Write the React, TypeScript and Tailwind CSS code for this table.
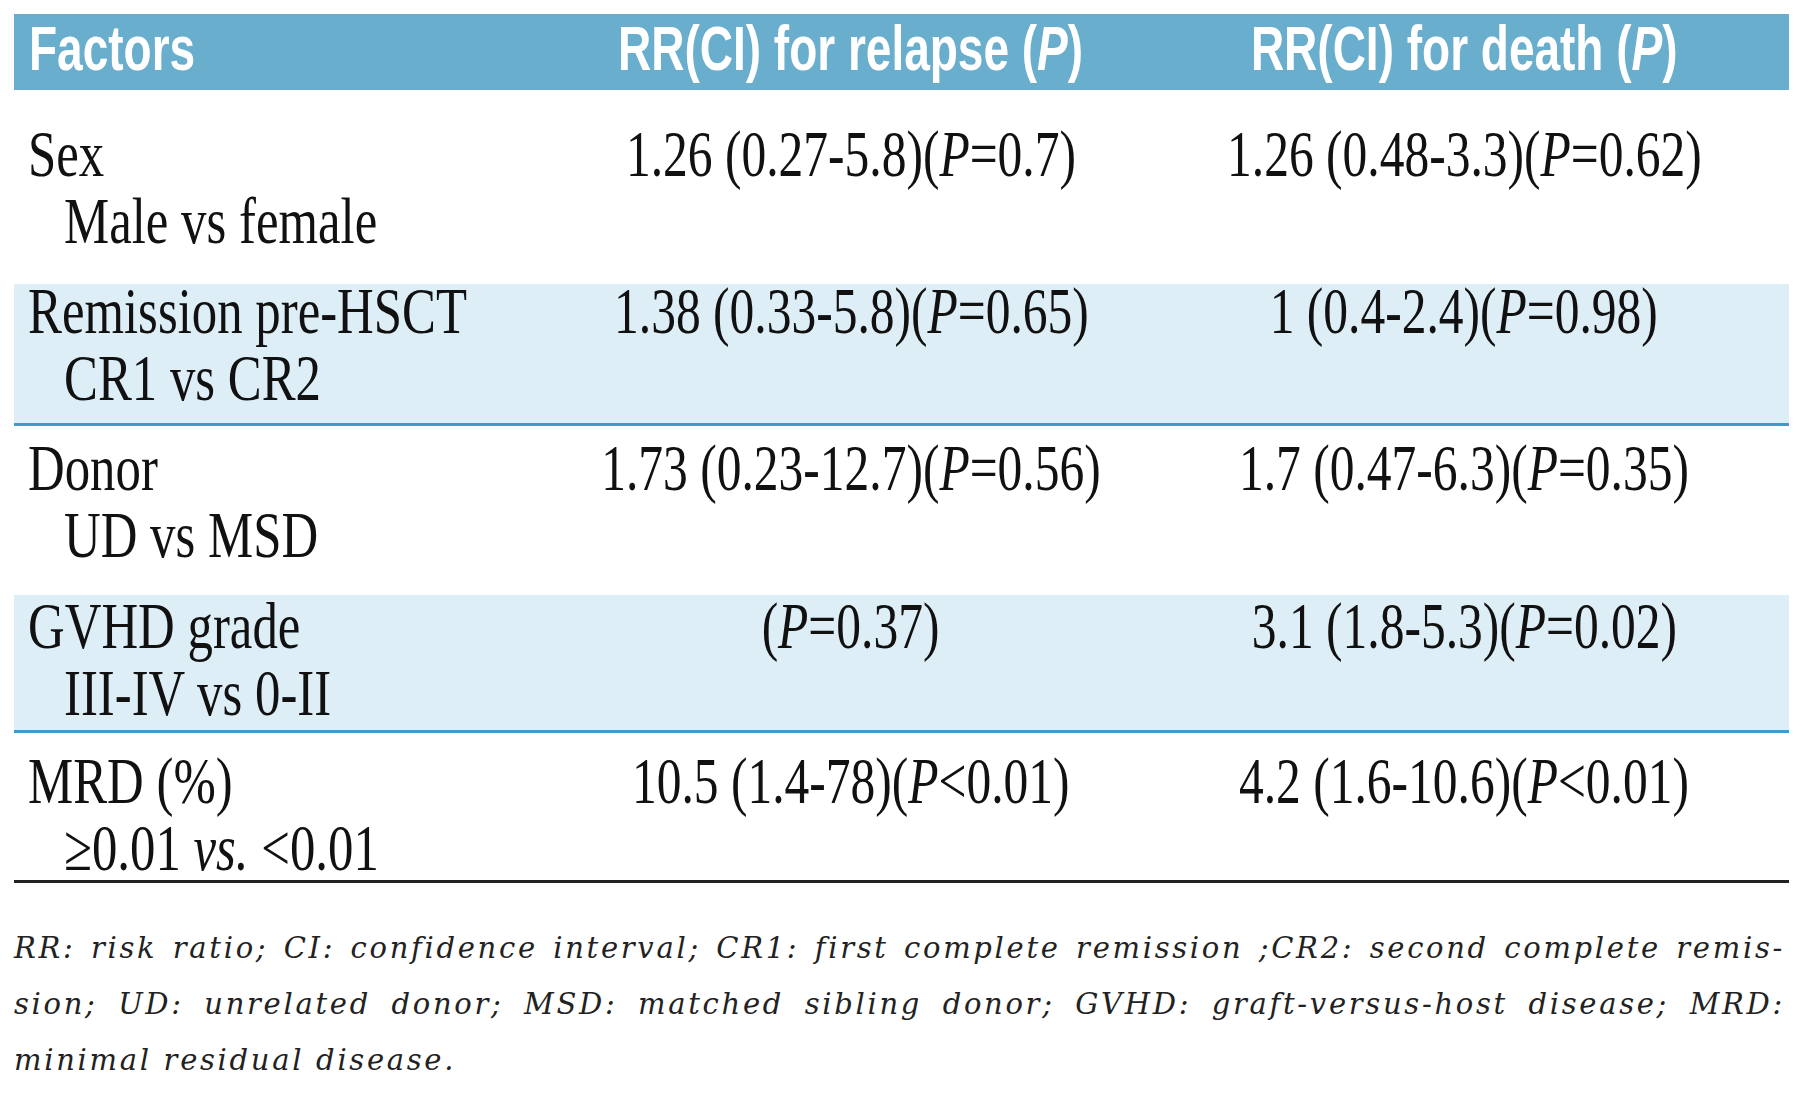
import type { ReactNode } from "react";

type Row = {
  label: string;
  sub: ReactNode;
  relapse: string;
  death: string;
  rowClass: string;
  offset: string;
};

const rows: Row[] = [
  {
    label: "Sex",
    sub: "Male vs female",
    relapse: "1.26 (0.27-5.8)(P=0.7)",
    death: "1.26 (0.48-3.3)(P=0.62)",
    rowClass: "h-[194px] bg-white",
    offset: "mt-[30px]",
  },
  {
    label: "Remission pre-HSCT",
    sub: "CR1 vs CR2",
    relapse: "1.38 (0.33-5.8)(P=0.65)",
    death: "1 (0.4-2.4)(P=0.98)",
    rowClass: "h-[142px] bg-[#ddeef7] border-b-[3px] border-[#3e9dc6]",
    offset: "-mt-[7px]",
  },
  {
    label: "Donor",
    sub: "UD vs MSD",
    relapse: "1.73 (0.23-12.7)(P=0.56)",
    death: "1.7 (0.47-6.3)(P=0.35)",
    rowClass: "h-[169px] bg-white",
    offset: "mt-[8px]",
  },
  {
    label: "GVHD grade",
    sub: "III-IV vs 0-II",
    relapse: "(P=0.37)",
    death: "3.1 (1.8-5.3)(P=0.02)",
    rowClass: "h-[138px] bg-[#ddeef7] border-b-[3px] border-[#3e9dc6]",
    offset: "-mt-[3px]",
  },
  {
    label: "MRD (%)",
    sub: (
      <>
        ≥0.01 <i>vs.</i> &lt;0.01
      </>
    ),
    relapse: "10.5 (1.4-78)(P<0.01)",
    death: "4.2 (1.6-10.6)(P<0.01)",
    rowClass: "h-[150px] bg-white border-b-[3px] border-[#222]",
    offset: "mt-[14px]",
  },
];

// italic P inside the risk values
function Value({ text }: { text: string }) {
  const parts = text.split("P");
  return (
    <span className="inline-block whitespace-nowrap scale-x-[0.75] origin-center">
      {parts.map((p, i) => (
        <span key={i}>
          {i > 0 && <i>P</i>}
          {p}
        </span>
      ))}
    </span>
  );
}

export default function App() {
  return (
    <div className="min-h-screen bg-white pt-[14px] pl-[14px]">
      <div className="w-[1775px]">
        {/* Header */}
        <div className="flex h-[76px] bg-[#6aaecd] text-white font-bold text-[63px] leading-[68px] font-['Liberation_Sans',Arial,sans-serif]">
          <div className="w-[526px] pl-[15px]">
            <span className="inline-block whitespace-nowrap scale-x-[0.73] origin-left">Factors</span>
          </div>
          <div className="w-[622px] flex justify-center">
            <span className="inline-block whitespace-nowrap scale-x-[0.73] origin-center">
              RR(CI) for relapse (<i>P</i>)
            </span>
          </div>
          <div className="w-[604px] flex justify-center">
            <span className="inline-block whitespace-nowrap scale-x-[0.73] origin-center">
              RR(CI) for death (<i>P</i>)
            </span>
          </div>
        </div>

        {/* Rows */}
        <div className="font-['Liberation_Serif','Times_New_Roman',serif] text-[66px] leading-[67px] text-[#111]">
          {rows.map((r) => (
            <div key={r.label} className={`box-border flow-root ${r.rowClass}`}>
              <div className={`flex ${r.offset}`}>
                <div className="w-[526px] pl-[14px]">
                  <div>
                    <span className="inline-block whitespace-nowrap scale-x-[0.77] origin-left">{r.label}</span>
                  </div>
                  <div className="pl-[36px]">
                    <span className="inline-block whitespace-nowrap scale-x-[0.77] origin-left">{r.sub}</span>
                  </div>
                </div>
                <div className="w-[622px] flex justify-center">
                  <Value text={r.relapse} />
                </div>
                <div className="w-[604px] flex justify-center">
                  <Value text={r.death} />
                </div>
              </div>
            </div>
          ))}
        </div>

        {/* Footnote */}
        <div className="mt-[37px] pr-[4px] italic font-['DejaVu_Serif',serif] text-[29px] leading-[56px] tracking-[2.7px] text-[#222]">
          <div className="text-justify [text-align-last:justify] whitespace-nowrap">
            RR: risk ratio; CI: confidence interval; CR1: first complete remission ;CR2: second complete remis-
          </div>
          <div className="text-justify [text-align-last:justify] whitespace-nowrap">
            sion; UD: unrelated donor; MSD: matched sibling donor; GVHD: graft-versus-host disease; MRD:
          </div>
          <div className="whitespace-nowrap">minimal residual disease.</div>
        </div>
      </div>
    </div>
  );
}
